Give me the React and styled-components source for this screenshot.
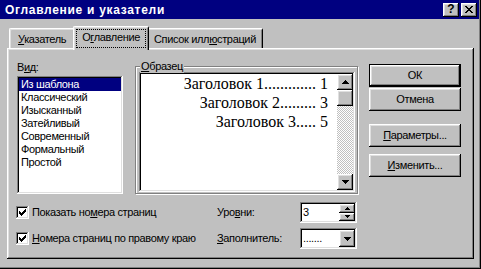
import React from 'react';
import styled, { createGlobalStyle, css } from 'styled-components';

const Global = createGlobalStyle`
  html, body { margin: 0; padding: 0; background: #c0c0c0; }
  body { font-family: "Liberation Sans", Arial, sans-serif; font-size: 11px; letter-spacing: -0.35px; color: #000; }
  * { box-sizing: border-box; }
`;

const raised = css`
  box-shadow: inset -1px -1px #000, inset 1px 1px #fff, inset -2px -2px #808080, inset 2px 2px #dfdfdf;
`;
const sunken = css`
  box-shadow: inset -1px -1px #fff, inset 1px 1px #808080, inset -2px -2px #dfdfdf, inset 2px 2px #000;
`;

const Dialog = styled.div`
  width: 481px;
  height: 269px;
  background: #c0c0c0;
  display: flex;
  flex-direction: column;
  box-shadow: inset -1px -1px #000, inset -2px -2px #808080;
  overflow: hidden;
`;

const TitleBar = styled.div`
  height: 19px;
  margin-right: 2px;
  background: #000080;
  display: flex;
  align-items: center;
  padding: 0 2px 0 5px;
`;

const TitleText = styled.div`
  flex: 1;
  color: #fff;
  font-weight: bold;
  font-size: 12px;
  letter-spacing: 0.7px;
  line-height: 14px;
`;

const TitleButtons = styled.div`
  display: flex;
  gap: 2px;
`;

const TitleButton = styled.div`
  width: 16px;
  height: 14px;
  background: #c0c0c0;
  ${raised};
  display: flex;
  align-items: center;
  justify-content: center;
  font-weight: bold;
  font-size: 12px;
  letter-spacing: 0;
  line-height: 12px;
  padding-bottom: 1px;
`;

const TabStrip = styled.div`
  position: relative;
  z-index: 1;
  margin-top: 7px;
  height: 22px;
  padding-left: 9px;
  display: flex;
  align-items: flex-end;
`;

const Tab = styled.div`
  position: relative;
  height: ${p => (p.$active ? 24 : 20)}px;
  margin: ${p => (p.$active ? '0 -2px -2px' : '0')};
  z-index: ${p => (p.$active ? 2 : 1)};
  padding: ${p => (p.$active ? '3px 3px 0' : `4px ${p.$pad ?? 7}px 0`)};
  background: #c0c0c0;
  border-top: 1px solid #fff;
  border-left: 1px solid #fff;
  border-right: 1px solid #000;
  border-radius: 2px 2px 0 0;
  box-shadow: inset 1px 1px #dfdfdf, inset -1px 0 #808080;
  line-height: 13px;
  white-space: nowrap;
`;

const Focus = styled.div`
  outline: 1px dotted #000;
  outline-offset: 0;
  padding: 1px 5px 3px;
`;

const U = styled.span`
  text-decoration: underline;
  text-underline-offset: 1px;
`;

const Panel = styled.div`
  position: relative;
  z-index: 0;
  margin: 0 7px 0 7px;
  height: 211px;
  padding: 13px 12px 0 10px;
  box-shadow: inset -1px -1px #000, inset 1px 1px #fff, inset -2px -2px #808080, inset 2px 2px #dfdfdf;
  display: flex;
  flex-direction: column;
`;

const TopRow = styled.div`
  display: flex;
  align-items: flex-start;
`;

const ListCol = styled.div`
  width: 106px;
  display: flex;
  flex-direction: column;
`;

const FieldLabel = styled.div`
  line-height: 13px;
  margin-bottom: 2px;
`;

const ListBox = styled.div`
  height: 118px;
  background: #fff;
  ${sunken};
  padding: 2px;
  display: flex;
  flex-direction: column;
`;

const ListItem = styled.div`
  height: 13px;
  line-height: 13px;
  padding-left: 2px;
  background: ${p => (p.$selected ? '#000080' : 'transparent')};
  color: ${p => (p.$selected ? '#fff' : '#000')};
  white-space: nowrap;
`;

const GroupBox = styled.div`
  position: relative;
  margin: 5px 0 0 12px;
  width: 223px;
  height: 128px;
  border: 1px solid #808080;
  box-shadow: inset 1px 1px #fff, 1px 1px #fff;
  padding: 5px 2px 1px 3px;
  display: flex;
`;

const Legend = styled.div`
  position: absolute;
  top: -7px;
  left: 4px;
  padding: 0 1px;
  background: #c0c0c0;
  line-height: 13px;
`;

const SampleBox = styled.div`
  flex: 1;
  display: flex;
  padding: 2px;
  ${sunken};
`;

const SampleText = styled.div`
  flex: 1;
  background: #fff;
  padding-right: 9px;
  font-family: "Liberation Serif", "Times New Roman", serif;
  font-size: 16px;
  letter-spacing: 0;
  line-height: 19px;
  text-align: right;
`;

const ScrollBar = styled.div`
  width: 16px;
  display: flex;
  flex-direction: column;
`;

const ScrollButton = styled.div`
  height: 16px;
  background: #c0c0c0;
  ${raised};
  display: flex;
  align-items: center;
  justify-content: center;
`;

const Thumb = styled.div`
  height: 16px;
  background: #c0c0c0;
  ${raised};
`;

const Track = styled.div`
  flex: 1;
  background: repeating-conic-gradient(#c0c0c0 0 25%, #fff 0 50%) 0 0 / 2px 2px;
`;

const ButtonCol = styled.div`
  margin: 3px 0 0 11px;
  width: 92px;
  display: flex;
  flex-direction: column;
`;

const Button = styled.div`
  height: 23px;
  margin-top: ${p => p.$gap || 0}px;
  background: #c0c0c0;
  border: ${p => (p.$default ? '1px solid #000' : 'none')};
  ${raised};
  display: flex;
  align-items: center;
  justify-content: center;
  line-height: 13px;
`;

const OptionsGrid = styled.div`
  margin-top: 8px;
  display: grid;
  grid-template-columns: 200px 83px 57px;
  grid-template-rows: 21px 21px;
  row-gap: 5px;
  align-items: center;
`;

const CheckRow = styled.div`
  display: flex;
  align-items: center;
  gap: 3px;
  margin-left: -1px;
  line-height: 13px;
  white-space: nowrap;
`;

const CheckBox = styled.div`
  width: 13px;
  height: 13px;
  background: #fff;
  ${sunken};
  display: flex;
  align-items: center;
  justify-content: center;
`;

const OptLabel = styled.div`
  line-height: 13px;
`;

const Field = styled.div`
  height: 21px;
  background: #fff;
  ${sunken};
  padding: 2px;
  display: flex;
  align-items: stretch;
`;

const FieldValue = styled.div`
  flex: 1;
  padding-left: 1px;
  display: flex;
  align-items: center;
  line-height: 13px;
`;

const SpinCol = styled.div`
  width: 16px;
  display: flex;
  flex-direction: column;
`;

const SpinButton = styled.div`
  flex: 1;
  background: #c0c0c0;
  ${raised};
  display: flex;
  align-items: center;
  justify-content: center;
`;

const DropButton = styled.div`
  width: 16px;
  background: #c0c0c0;
  ${raised};
  display: flex;
  align-items: center;
  justify-content: center;
`;

const Arrow = ({ dir = 'up', w = 7, h = 4 }) => (
  <svg width={w} height={h} viewBox={`0 0 ${w} ${h}`} shapeRendering="crispEdges">
    <polygon
      points={dir === 'up' ? `0,${h} ${w / 2},0 ${w},${h}` : `0,0 ${w},0 ${w / 2},${h}`}
      fill="#000"
    />
  </svg>
);

const CheckMark = () => (
  <svg width="7" height="7" viewBox="0 0 7 7" shapeRendering="crispEdges">
    <path
      d="M6 0h1v1h-1z M5 1h2v1h-2z M0 2h1v1h-1z M4 2h3v1h-3z M0 3h2v1h-2z M3 3h3v1h-3z M0 4h5v1h-5z M1 5h3v1h-3z M2 6h1v1h-1z"
      fill="#000"
    />
  </svg>
);

const CloseIcon = () => (
  <svg width="8" height="7" viewBox="0 0 8 7" shapeRendering="crispEdges">
    <path
      d="M0 0h2v1h-2z M6 0h2v1h-2z M1 1h2v1h-2z M5 1h2v1h-2z M2 2h4v1h-4z M3 3h2v1h-2z M2 4h4v1h-4z M1 5h2v1h-2z M5 5h2v1h-2z M0 6h2v1h-2z M6 6h2v1h-2z"
      fill="#000"
    />
  </svg>
);

const styles = ['Из шаблона', 'Классический', 'Изысканный', 'Затейливый', 'Современный', 'Формальный', 'Простой'];

const sample = ['Заголовок 1............. 1', 'Заголовок 2......... 3', 'Заголовок 3..... 5'];

export default function App() {
  return (
    <>
      <Global />
      <Dialog>
        <TitleBar>
          <TitleText>Оглавление и указатели</TitleText>
          <TitleButtons>
            <TitleButton>?</TitleButton>
            <TitleButton><CloseIcon /></TitleButton>
          </TitleButtons>
        </TitleBar>
        <TabStrip>
          <Tab $pad={8}><U>У</U>казатель</Tab>
          <Tab $active><Focus>О<U>г</U>лавление</Focus></Tab>
          <Tab $pad={6}>Список илл<U>ю</U>страций</Tab>
        </TabStrip>
        <Panel>
          <TopRow>
            <ListCol>
              <FieldLabel>В<U>и</U>д:</FieldLabel>
              <ListBox>
                {styles.map((s, i) => (
                  <ListItem key={s} $selected={i === 0}>{s}</ListItem>
                ))}
              </ListBox>
            </ListCol>
            <GroupBox>
              <Legend><U>О</U>бразец</Legend>
              <SampleBox>
                <SampleText>
                  {sample.map(l => <div key={l}>{l}</div>)}
                </SampleText>
                <ScrollBar>
                  <ScrollButton><Arrow dir="up" /></ScrollButton>
                  <Thumb />
                  <Track />
                  <ScrollButton><Arrow dir="down" /></ScrollButton>
                </ScrollBar>
              </SampleBox>
            </GroupBox>
            <ButtonCol>
              <Button $default>ОК</Button>
              <Button $gap={1}>Отмена</Button>
              <Button $gap={13}><span><U>П</U>араметры...</span></Button>
              <Button $gap={7}><span><U>И</U>зменить...</span></Button>
            </ButtonCol>
          </TopRow>
          <OptionsGrid>
            <CheckRow>
              <CheckBox><CheckMark /></CheckBox>
              <span>Показать но<U>м</U>ера страниц</span>
            </CheckRow>
            <OptLabel>Уро<U>в</U>ни:</OptLabel>
            <Field>
              <FieldValue>3</FieldValue>
              <SpinCol>
                <SpinButton><Arrow dir="up" w={5} h={3} /></SpinButton>
                <SpinButton><Arrow dir="down" w={5} h={3} /></SpinButton>
              </SpinCol>
            </Field>
            <CheckRow>
              <CheckBox><CheckMark /></CheckBox>
              <span><U>Н</U>омера страниц по правому краю</span>
            </CheckRow>
            <OptLabel><U>З</U>аполнитель:</OptLabel>
            <Field>
              <FieldValue>.......</FieldValue>
              <DropButton><Arrow dir="down" /></DropButton>
            </Field>
          </OptionsGrid>
        </Panel>
      </Dialog>
    </>
  );
}
